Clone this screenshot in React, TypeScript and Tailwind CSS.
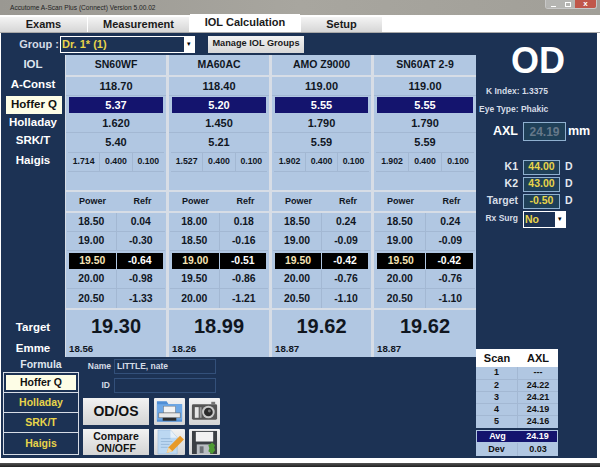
const lenses = [
  {
    name: 'SN60WF', width: 'w-[100px]', aconst: '118.70', hoffer: '5.37', holladay: '1.620', srkt: '5.40',
    haigis: ['1.714', '0.400', '0.100'],
    rows: [['18.50', '0.04'], ['19.00', '-0.30'], ['19.50', '-0.64'], ['20.00', '-0.98'], ['20.50', '-1.33']],
    target: '19.30', emme: '18.56',
  },
  {
    name: 'MA60AC', width: 'w-[100px]', aconst: '118.40', hoffer: '5.20', holladay: '1.450', srkt: '5.21',
    haigis: ['1.527', '0.400', '0.100'],
    rows: [['18.00', '0.18'], ['18.50', '-0.16'], ['19.00', '-0.51'], ['19.50', '-0.86'], ['20.00', '-1.21']],
    target: '18.99', emme: '18.26',
  },
  {
    name: 'AMO Z9000', width: 'w-[99px]', aconst: '119.00', hoffer: '5.55', holladay: '1.790', srkt: '5.59',
    haigis: ['1.902', '0.400', '0.100'],
    rows: [['18.50', '0.24'], ['19.00', '-0.09'], ['19.50', '-0.42'], ['20.00', '-0.76'], ['20.50', '-1.10']],
    target: '19.62', emme: '18.87',
  },
  {
    name: 'SN60AT 2-9', width: 'w-[102px]', aconst: '119.00', hoffer: '5.55', holladay: '1.790', srkt: '5.59',
    haigis: ['1.902', '0.400', '0.100'],
    rows: [['18.50', '0.24'], ['19.00', '-0.09'], ['19.50', '-0.42'], ['20.00', '-0.76'], ['20.50', '-1.10']],
    target: '19.62', emme: '18.87',
  },
];

const scans = [['1', '---'], ['2', '24.22'], ['3', '24.21'], ['4', '24.19'], ['5', '24.16']];

function LensCard({ lens }: { lens: (typeof lenses)[number] }) {
  return (
    <div className={`${lens.width} flex flex-col gap-[2px] text-[#10161f] font-bold`}>
      <div className="h-[20px] bg-[#b1c7e2] flex items-center justify-center text-[10.5px]">{lens.name}</div>
      <div className="h-[113px] bg-[#b1c7e2] flex flex-col text-[11px]">
        <div className="h-[19px] flex items-center justify-center border-b border-[#a3b8d3]">{lens.aconst}</div>
        <div className="h-[18px] flex items-center px-[3px]">
          <div className="h-[16px] w-full bg-[#14146e] text-white flex items-center justify-center">{lens.hoffer}</div>
        </div>
        <div className="h-[19px] flex items-center justify-center border-b border-[#a3b8d3]">{lens.holladay}</div>
        <div className="h-[19px] flex items-center justify-center">{lens.srkt}</div>
        <div className="h-[20px] mx-[2px] flex border-y border-[#a3b8d3] text-[8.7px]">
          {lens.haigis.map((v, i) => (
            <div key={i} className="flex-1 flex items-center justify-center border-r border-[#a3b8d3] last:border-r-0">
              {v}
            </div>
          ))}
        </div>
      </div>
      <div className="h-[19px] bg-[#b1c7e2] flex items-center text-[9px]">
        <span className="w-[53px] text-center">Power</span>
        <span className="flex-1 text-center">Refr</span>
      </div>
      <div className="bg-[#b1c7e2] flex flex-col text-[10.4px] px-[1px]">
        {lens.rows.map((r, i) =>
          i === 2 ? (
            <div key={i} className="h-[19px] flex items-center gap-[1px] px-[2px]">
              <div className="flex-1 h-[16px] bg-black text-[#f6e3b4] flex items-center justify-center">{r[0]}</div>
              <div className="flex-1 h-[16px] bg-black text-white flex items-center justify-center">{r[1]}</div>
            </div>
          ) : (
            <div key={i} className="h-[19px] flex items-center border-b border-[#a3b8d3] last:border-b-0">
              <div className="flex-1 h-full flex items-center justify-center border-r border-[#a3b8d3]">{r[0]}</div>
              <div className="flex-1 h-full flex items-center justify-center">{r[1]}</div>
            </div>
          ),
        )}
      </div>
      <div className="h-[47px] bg-[#b1c7e2] flex flex-col">
        <div className="h-[32px] flex items-center justify-center text-[20px]">{lens.target}</div>
        <div className="pl-[3px] mt-[1px] text-[9.7px] leading-[12px]">{lens.emme}</div>
      </div>
    </div>
  );
}

function PrinterIcon() {
  return (
    <svg viewBox="0 0 32 27" className="w-full h-full">
      <path d="M3 3h10l2 3h14v18H3z" fill="#4f8fd6" />
      <rect x="3" y="6" width="26" height="16" fill="#6ea8e6" />
      <rect x="10" y="8" width="12" height="7" fill="#f4f4f4" stroke="#777" strokeWidth="0.5" />
      <rect x="5" y="15" width="22" height="5" fill="#e8e8e8" stroke="#555" strokeWidth="0.5" />
      <rect x="9" y="20" width="14" height="3" fill="#2c2c2c" />
    </svg>
  );
}

function CameraIcon() {
  return (
    <svg viewBox="0 0 32 27" className="w-full h-full">
      <rect x="3" y="6" width="26" height="16" rx="1.5" fill="#555" />
      <rect x="6" y="9" width="4" height="11" fill="#e6e6e6" />
      <rect x="11" y="9" width="2" height="11" fill="#9a9a9a" />
      <circle cx="20" cy="14" r="6.5" fill="#c9c9c9" />
      <circle cx="20" cy="14" r="4.5" fill="#2a2a2a" />
      <circle cx="21" cy="13" r="1.5" fill="#777" />
      <rect x="23" y="3.5" width="4" height="3" fill="#777" />
    </svg>
  );
}

function NoteIcon() {
  return (
    <svg viewBox="0 0 32 27" className="w-full h-full">
      <path d="M4 1h13l7 8v17H4z" fill="#bcd8f2" stroke="#8fb2d4" strokeWidth="0.5" />
      <path d="M17 1v8h7z" fill="#e6f1fb" />
      <path d="M7 10h10M7 13h12M7 16h9M7 19h7" stroke="#8fb2d4" strokeWidth="0.8" />
      <path d="M13 25l2-6 12-12 4 4-12 12z" fill="#e79a2a" />
      <path d="M13 25l2-6 4 4z" fill="#f3d8a8" />
    </svg>
  );
}

function SaveIcon() {
  return (
    <svg viewBox="0 0 32 27" className="w-full h-full">
      <rect x="3" y="2" width="26" height="24" fill="#3b3f44" />
      <rect x="7" y="3" width="18" height="10" fill="#f2f2f2" />
      <rect x="8" y="16" width="14" height="10" fill="#b9bdc2" />
      <rect x="11" y="18" width="4" height="7" fill="#6b6f74" />
      <path d="M24 14l3 3-1 2 1 3-3 4-4-3 1-3-1-3z" fill="#4d9a32" />
    </svg>
  );
}

function IconButton({ children }: { children: React.ReactNode }) {
  return <div className="h-full bg-gradient-to-b from-[#f2f2f2] to-[#d4d4d4] rounded-[1px]">{children}</div>;
}

export default function App() {
  return (
    <div className="w-[600px] h-[467px] bg-white overflow-hidden flex flex-col font-['Liberation_Sans',Arial,sans-serif]">
      {/* title bar */}
      <div className="h-[15px] shrink-0 bg-gradient-to-r from-[#9a9892] via-[#a8a69f] to-[#a19f98] flex items-center pl-[10px] pr-[3px]">
        <span className="text-[6.6px] text-[#222]">Accutome A-Scan Plus (Connect) Version 5.00.02</span>
        <div className="ml-auto self-start flex h-[9px] w-[52px] rounded-b-[3px] overflow-hidden border border-t-0 border-[#c8c8c8]">
          <div className="w-[15px] bg-[#b5b5b2] flex items-end justify-center pb-[1px]">
            <div className="w-[5px] h-[1.5px] bg-white" />
          </div>
          <div className="w-[14px] bg-[#b5b5b2] flex items-center justify-center">
            <div className="w-[6px] h-[5px] border border-white" />
          </div>
          <div className="flex-1 bg-[#c0574a] flex items-center justify-center text-[8px] font-bold text-white leading-none">x</div>
        </div>
      </div>

      {/* tabs */}
      <div className="h-[18px] shrink-0 flex items-end text-[11px] font-bold text-[#1a1a1a] border-b border-[#a8a8a8]">
        <div className="w-[87px] h-[15px] mr-[1px] bg-gradient-to-b from-[#f4f4f4] to-[#d6d6d6] flex items-center justify-center">Exams</div>
        <div className="w-[101px] h-[15px] mr-[1px] bg-gradient-to-b from-[#f4f4f4] to-[#d6d6d6] flex items-center justify-center">Measurement</div>
        <div className="w-[110px] h-[18px] mr-[1px] bg-white flex items-center justify-center pb-[1px]">IOL Calculation</div>
        <div className="w-[81px] h-[15px] bg-gradient-to-b from-[#f4f4f4] to-[#d6d6d6] flex items-center justify-center">Setup</div>
      </div>

      {/* main panel */}
      <div className="h-[425px] shrink-0 ml-[1px] mr-[3px] bg-[#1c3254] flex">
        <div className="w-[473px] shrink-0 flex flex-col">
          <div className="h-[22px] shrink-0 flex items-center">
            <span className="w-[59px] text-right pr-[1px] text-[11px] font-bold text-[#d5dce6]">Group :</span>
            <div className="w-[135px] h-[17px] border border-white flex">
              <div className="flex-1 pl-[1px] bg-[#1c3254] text-[#e8d44a] text-[11px] font-bold flex items-center">Dr. 1* (1)</div>
              <div className="w-[10px] bg-white flex items-center justify-center text-[7px] text-black">▾</div>
            </div>
            <div className="ml-[13px] w-[96px] h-[17px] bg-gradient-to-b from-[#f2f2f2] to-[#d8d8d8] text-[#1a1a1a] text-[9.2px] font-bold flex items-center justify-center">
              Manage IOL Groups
            </div>
          </div>

          <div className="flex shrink-0 h-[302px]">
            <div className="w-[64px] shrink-0 flex flex-col items-center text-white font-bold text-[11.5px]">
              <div className="h-[18px] shrink-0 pt-[2px] flex items-center text-[#dfe5ee]">IOL</div>
              <div className="h-[23px] shrink-0 flex items-center">A-Const</div>
              <div className="ml-[2px] w-[56px] h-[18px] shrink-0 bg-[#fdfde6] text-[#111] flex items-center justify-center">Hoffer Q</div>
              <div className="h-[18px] shrink-0 flex items-center">Holladay</div>
              <div className="h-[18px] shrink-0 flex items-center">SRK/T</div>
              <div className="h-[20px] shrink-0 pt-[2px] flex items-center">Haigis</div>
              <div className="flex-1" />
              <div className="h-[20px] shrink-0 pt-[2px] flex items-center">Target</div>
              <div className="h-[20px] shrink-0 pt-[3px] flex items-center">Emme</div>
            </div>
            <div className="flex gap-[3px] bg-[#d7dde6] pl-[1px] h-[302px]">
              {lenses.map((lens) => (
                <LensCard key={lens.name} lens={lens} />
              ))}
            </div>
          </div>

          <div className="flex flex-1">
            <div className="w-[76px] ml-[2px] shrink-0 flex flex-col">
              <div className="h-[15px] text-center text-[10.5px] font-bold text-[#dfe5ee] leading-[15px]">Formula</div>
              <div className="h-[83px] border border-[#d7dde6] flex flex-col text-[10.5px] font-bold text-[#e8d44a]">
                <div className="h-[20px] border-b border-[#d7dde6] p-[2px] flex">
                  <div className="flex-1 bg-[#fdfde6] text-[#111] flex items-center justify-center">Hoffer Q</div>
                </div>
                <div className="h-[20px] border-b border-[#d7dde6] flex items-center justify-center">Holladay</div>
                <div className="h-[20px] border-b border-[#d7dde6] flex items-center justify-center">SRK/T</div>
                <div className="flex-1 flex items-center justify-center">Haigis</div>
              </div>
            </div>
            <div className="ml-[1px] pt-[2px] flex flex-col">
              <div className="flex items-center h-[15px] text-[8.5px] font-bold text-[#d5dce6]">
                <span className="w-[31px] text-right">Name</span>
                <div className="ml-[3px] w-[102px] h-[15px] border border-[#33507a] pl-[2px] flex items-center text-[#d5dce6]">LITTLE, nate</div>
              </div>
              <div className="flex items-center h-[15px] mt-[4px] text-[8.5px] font-bold text-[#d5dce6]">
                <span className="w-[31px] text-right pr-[1px]">ID</span>
                <div className="ml-[3px] w-[102px] h-[15px] border border-[#33507a]" />
              </div>
              <div className="mt-[5px] ml-[3px] grid grid-cols-[66px_32px_31px] grid-rows-[27px_26px] gap-x-[4px] gap-y-[4px] items-stretch">
                <div className="bg-gradient-to-b from-[#f2f2f2] to-[#d4d4d4] text-[#111] text-[14px] font-bold flex items-center justify-center">OD/OS</div>
                <div className="ml-[1px]"><IconButton><PrinterIcon /></IconButton></div>
                <IconButton><CameraIcon /></IconButton>
                <div className="bg-gradient-to-b from-[#f2f2f2] to-[#d4d4d4] text-[#111] text-[10.5px] leading-[12px] font-bold flex items-center justify-center text-center">
                  Compare<br />ON/OFF
                </div>
                <div className="ml-[1px]"><IconButton><NoteIcon /></IconButton></div>
                <IconButton><SaveIcon /></IconButton>
              </div>
            </div>
          </div>
        </div>

        {/* right side */}
        <div className="flex-1 flex flex-col pb-[2px]">
          <div className="h-[41px] shrink-0 mt-[7px] text-center text-[36px] leading-[41px] font-bold text-white w-[128px]">OD</div>
          <div className="mt-[1px] ml-[12px] h-[18px] text-[8.5px] font-bold text-[#d5dce6] leading-[18px]">K Index: 1.3375</div>
          <div className="ml-[5px] h-[18px] text-[8.5px] font-bold text-[#d5dce6] leading-[18px]">Eye Type: Phakic</div>
          <div className="flex items-center mt-[4px] h-[19px]">
            <span className="w-[44px] text-right text-[12.5px] font-bold text-white">AXL</span>
            <div className="ml-[5px] w-[43px] h-[19px] border border-[#8fb0cf] bg-[#1f4058] text-[#66788a] text-[12px] font-bold flex items-center justify-center">24.19</div>
            <span className="ml-[2px] text-[12.5px] font-bold text-white">mm</span>
          </div>
          <div className="flex items-center mt-[18px] h-[16px]">
            <span className="w-[44px] text-right text-[10.5px] font-bold text-[#e4e9f0]">K1</span>
            <div className="ml-[5px] w-[37px] h-[15px] border border-[#8fb0cf] bg-[#1f4058] text-[#e8d44a] text-[10.5px] font-bold flex items-center justify-center">44.00</div>
            <span className="ml-[5px] text-[10.5px] font-bold text-[#e4e9f0]">D</span>
          </div>
          <div className="flex items-center mt-[1px] h-[16px]">
            <span className="w-[44px] text-right text-[10.5px] font-bold text-[#e4e9f0]">K2</span>
            <div className="ml-[5px] w-[37px] h-[15px] border border-[#8fb0cf] bg-[#1f4058] text-[#e8d44a] text-[10.5px] font-bold flex items-center justify-center">43.00</div>
            <span className="ml-[5px] text-[10.5px] font-bold text-[#e4e9f0]">D</span>
          </div>
          <div className="flex items-center mt-[1px] h-[16px]">
            <span className="w-[44px] text-right text-[10.5px] font-bold text-[#d5dce6]">Target</span>
            <div className="ml-[5px] w-[37px] h-[15px] border border-[#8fb0cf] bg-[#1f4058] text-[#e8d44a] text-[10.5px] font-bold flex items-center justify-center">-0.50</div>
            <span className="ml-[5px] text-[10.5px] font-bold text-[#e4e9f0]">D</span>
          </div>
          <div className="flex items-center mt-[2px] h-[17px]">
            <span className="w-[44px] text-right text-[8.5px] font-bold text-[#d5dce6] pb-[2px]">Rx Surg</span>
            <div className="ml-[5px] w-[43px] h-[17px] border border-white flex">
              <div className="flex-1 pl-[1px] bg-[#1c3254] text-[#e8d44a] text-[10.5px] font-bold flex items-center">No</div>
              <div className="w-[10px] bg-white flex items-center justify-center text-[7px] text-black">▾</div>
            </div>
          </div>

          {/* scan table */}
          <div className="mt-auto ml-[2px] w-[82px] flex flex-col font-bold text-[#111]">
            <div className="h-[18px] bg-white flex items-center text-[11px]">
              <span className="w-[42px] text-center">Scan</span>
              <span className="flex-1 text-center">AXL</span>
            </div>
            <div className="bg-[#b1c7e2] text-[9px]">
              {scans.map((s) => (
                <div key={s[0]} className="h-[12px] flex items-center border-b border-[#a3b8d3] last:border-b-0 first:h-[13px]">
                  <span className="w-[42px] h-full flex items-center justify-center border-r border-[#a3b8d3]">{s[0]}</span>
                  <span className="flex-1 text-center">{s[1]}</span>
                </div>
              ))}
            </div>
            <div className="mt-[2px] h-[13px] bg-[#14146e] text-white flex items-center text-[9px] border border-[#b1c7e2]">
              <span className="w-[41px] text-center">Avg</span>
              <span className="flex-1 text-center">24.19</span>
            </div>
            <div className="h-[13px] bg-[#b1c7e2] flex items-center text-[9px]">
              <span className="w-[42px] h-full flex items-center justify-center border-r border-[#a3b8d3]">Dev</span>
              <span className="flex-1 text-center">0.03</span>
            </div>
          </div>
        </div>
      </div>

      {/* bottom edge */}
      <div className="h-[5px] shrink-0 bg-white" />
      <div className="flex-1 bg-gradient-to-b from-[#555] to-[#222]" />
    </div>
  );
}
